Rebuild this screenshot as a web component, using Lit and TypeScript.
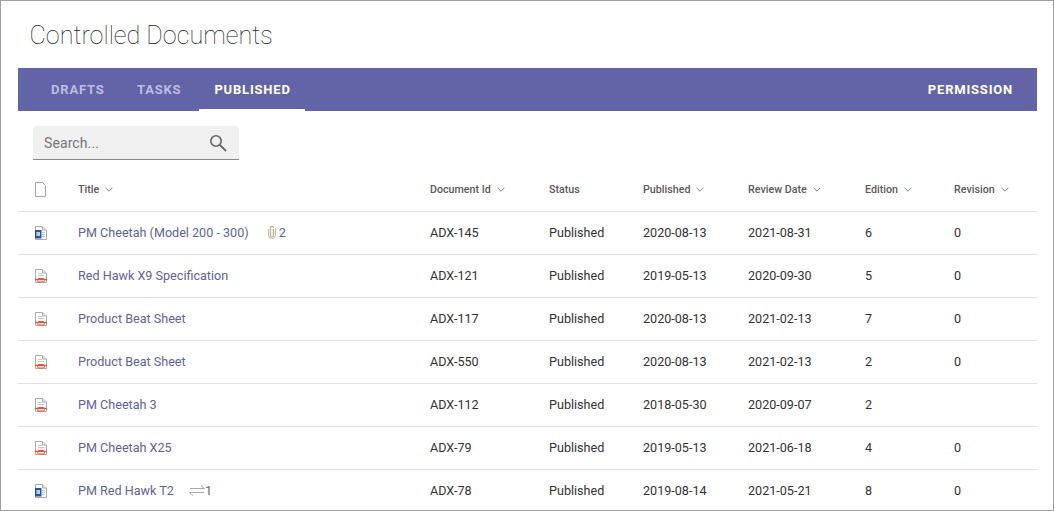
import { LitElement, html, css, svg } from 'lit';
import { customElement } from 'lit/decorators.js';

type Row = {
  kind: 'word' | 'pdf';
  title: string;
  id: string;
  published: string;
  review: string;
  edition: string;
  revision: string;
  attachments?: string;
  links?: string;
};

const ROWS: Row[] = [
  { kind: 'word', title: 'PM Cheetah (Model 200 - 300)', attachments: '2', id: 'ADX-145', published: '2020-08-13', review: '2021-08-31', edition: '6', revision: '0' },
  { kind: 'pdf', title: 'Red Hawk X9 Specification', id: 'ADX-121', published: '2019-05-13', review: '2020-09-30', edition: '5', revision: '0' },
  { kind: 'pdf', title: 'Product Beat Sheet', id: 'ADX-117', published: '2020-08-13', review: '2021-02-13', edition: '7', revision: '0' },
  { kind: 'pdf', title: 'Product Beat Sheet', id: 'ADX-550', published: '2020-08-13', review: '2021-02-13', edition: '2', revision: '0' },
  { kind: 'pdf', title: 'PM Cheetah 3', id: 'ADX-112', published: '2018-05-30', review: '2020-09-07', edition: '2', revision: '' },
  { kind: 'pdf', title: 'PM Cheetah X25', id: 'ADX-79', published: '2019-05-13', review: '2021-06-18', edition: '4', revision: '0' },
  { kind: 'word', title: 'PM Red Hawk T2', links: '1', id: 'ADX-78', published: '2019-08-14', review: '2021-05-21', edition: '8', revision: '0' },
];

const chevron = html`<svg class="chev" width="8" height="5" viewBox="0 0 8 5"><path d="M.6.8 4 4.200 7.400.8" fill="none" stroke="#74808f" stroke-width="1"/></svg>`;

// shared page outline for the file type icons
const sheet = svg`<path d="M2.500 1.500H9.500L13.500 5V14.500H2.500Z" fill="#fff" stroke="#acacac"/><path d="M9.500 1.500V5H13.500" fill="#e8e8e8" stroke="#acacac"/>`;

const wordIcon = html`<svg class="ficon" width="14" height="15" viewBox="0 0 14 15">
  ${sheet}
  <path d="M9 7.500h3M9 9.500h3M9 11.500h3" stroke="#c4c4c4"/>
  <rect x="2" y="5" width="6.500" height="8.500" fill="#2b579a"/>
  <rect x="3.500" y="7" width="3.500" height="4" fill="#b9cfee"/>
</svg>`;

const pdfIcon = html`<svg class="ficon" width="14" height="15" viewBox="0 0 14 15">
  ${sheet}
  <path d="M5 5.500h4M5 7.500h6" stroke="#c9c9c9"/>
  <rect x="4.500" y="10.500" width="7" height="3.500" rx="1.500" fill="#fff" stroke="#e2583a"/>
  <path d="M2 11.500h12" stroke="#e2583a" stroke-width="1.400"/>
</svg>`;

@customElement('app-root')
export class AppRoot extends LitElement {
  static override styles = css`
    :host {
      display: block;
      box-sizing: border-box;
      width: 1054px;
      height: 511px;
      overflow: hidden;
      background: #fff;
      border: 1px solid #a0a0a0;
      font-family: Roboto, sans-serif;
      color: #333;
    }

    .page {
      padding: 0 16px 0 17px;
    }

    h1 {
      margin: 0;
      padding: 19px 0 0 11.500px;
      height: 67px;
      box-sizing: border-box;
      font-size: 25.200px;
      line-height: 32px;
      font-weight: 100;
      color: #222;
    }

    nav {
      display: flex;
      align-items: stretch;
      height: 43px;
      padding: 0 10px 0 18px;
      background: #6264a7;
      font-size: 13px;
      font-weight: 700;
      letter-spacing: .8px;
      color: #bcbde0;
    }

    .tab {
      display: flex;
      align-items: center;
      padding: 2px 15px 0;
      border-bottom: 2px solid transparent;
      box-sizing: border-box;
    }

    .tab.tasks {
      padding-left: 17.500px;
      padding-right: 18px;
    }

    .tab.active {
      padding-right: 14px;
      color: #fff;
      border-bottom-color: #fff;
    }

    .spacer { flex: 1; }

    .perm {
      color: #fff;
      display: flex;
      align-items: center;
      padding: 0 14px;
    }

    .search {
      display: flex;
      align-items: center;
      justify-content: space-between;
      box-sizing: border-box;
      width: 206px;
      height: 34px;
      margin: 15px 0 0 15px;
      padding: 0 12px 0 11px;
      background: #f0f0f0;
      border-bottom: 1px solid #8a8a8a;
      border-radius: 3px 3px 0 0;
      font-size: 14px;
      letter-spacing: .1px;
      color: #767676;
    }

    .row {
      display: grid;
      grid-template-columns: 45px 352px 119px 94px 105px 117px 89px 1fr;
      align-items: center;
      padding: 0 0 2px 15px;
      height: 43px;
      box-sizing: border-box;
      border-top: 1px solid #e2e2e2;
      font-size: 12.600px;
      color: #333;
    }

    .head {
      height: 51px;
      padding: 8px 0 0 15px;
      border-top: 0;
      font-size: 10.700px;
      font-weight: 500;
      color: #5a5a5a;
    }

    .chev {
      margin-left: 6px;
      vertical-align: 1px;
    }

    .ficon { display: block; }

    .blank { display: block; }

    .title {
      color: #5f62a2;
      display: flex;
      align-items: center;
    }

    .meta {
      display: inline-flex;
      align-items: center;
      margin-left: 18px;
      color: #5f62a2;
      gap: 2px;
    }

    .links {
      margin-left: 15px;
      gap: 0;
    }
  `;

  private renderHead() {
    return html`<div class="row head">
      <svg class="blank" width="14" height="15" viewBox="0 0 14 15"><path d="M2.500.5H9.500L12.500 3.500V14.500H2.500Z" fill="#fff" stroke="#a8a8a8"/></svg>
      <div>Title${chevron}</div>
      <div>Document Id${chevron}</div>
      <div>Status</div>
      <div>Published${chevron}</div>
      <div>Review Date${chevron}</div>
      <div>Edition${chevron}</div>
      <div>Revision${chevron}</div>
    </div>`;
  }

  private renderRow(r: Row) {
    return html`<div class="row">
      ${r.kind === 'word' ? wordIcon : pdfIcon}
      <div class="title">
        ${r.title}
        ${r.attachments
          ? html`<span class="meta"><svg width="10" height="13" viewBox="0 0 10 13"><path d="M1.500 3V9.500a3.500 3 0 0 0 7 0V2.500" fill="none" stroke="#a9b8cf" stroke-width="1"/><path d="M6.500 3V9.500a1.500 1.500 0 0 1-3 0V2a1.500 1.500 0 0 1 3 0" fill="none" stroke="#d2a668" stroke-width="1.200"/></svg>${r.attachments}</span>`
          : null}
        ${r.links
          ? html`<span class="meta links"><svg width="16" height="11" viewBox="0 0 16 11"><path d="M1 3.500H15.500M12 .5 15.500 3.500M15 7.500H.5M4 10.500 .5 7.500" fill="none" stroke="#a8a8a8"/></svg>${r.links}</span>`
          : null}
      </div>
      <div>${r.id}</div>
      <div>Published</div>
      <div>${r.published}</div>
      <div>${r.review}</div>
      <div>${r.edition}</div>
      <div>${r.revision}</div>
    </div>`;
  }

  override render() {
    return html`<div class="page">
      <h1>Controlled Documents</h1>
      <nav>
        <div class="tab">DRAFTS</div>
        <div class="tab tasks">TASKS</div>
        <div class="tab active">PUBLISHED</div>
        <div class="spacer"></div>
        <div class="perm">PERMISSION</div>
      </nav>
      <div class="search">
        <span>Search...</span>
        <svg width="18" height="18" viewBox="0 0 18 18"><circle cx="7" cy="7" r="5.200" fill="none" stroke="#666" stroke-width="1.600"/><path d="M11 11l6 6" stroke="#666" stroke-width="1.800"/></svg>
      </div>
      ${this.renderHead()}
      ${ROWS.map((r) => this.renderRow(r))}
    </div>`;
  }
}
